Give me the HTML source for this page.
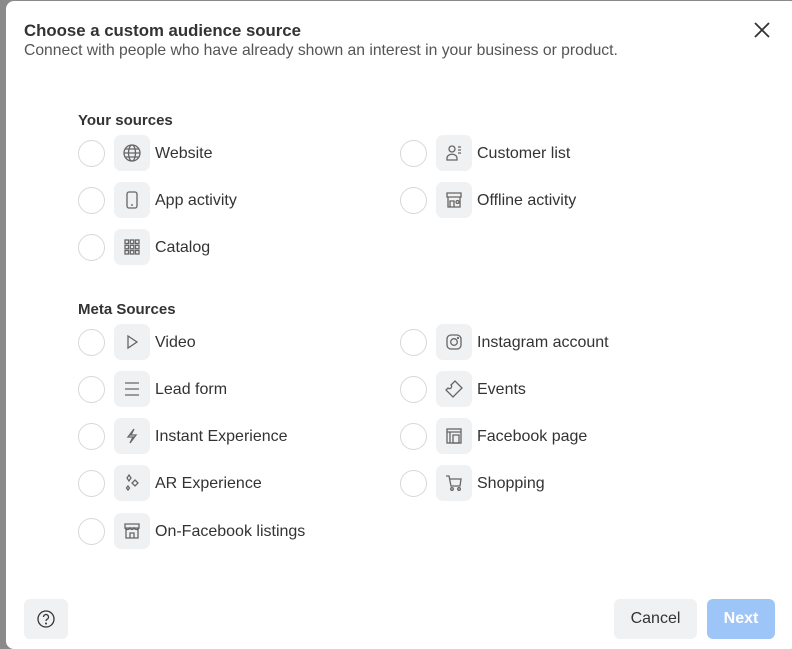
<!DOCTYPE html>
<html><head><meta charset="utf-8"><style>
*{box-sizing:border-box;margin:0;padding:0}
body{width:792px;height:649px;background:#8a8a8a;font-family:"Liberation Sans",sans-serif;position:relative;overflow:hidden}
.modal{position:absolute;left:6px;top:1px;width:792px;height:648px;background:#fff;border-radius:8px}
.t{position:absolute;left:24px;top:21px;font-size:16.8px;font-weight:bold;color:#333}
.s{position:absolute;left:24px;top:42px;font-size:15.7px;color:#555}
.x{position:absolute;left:752px;top:20px}
.h{position:absolute;left:78px;font-size:15px;font-weight:bold;color:#333}
.r{position:absolute;height:36px}
.r .c{position:absolute;left:0;top:5px;width:27px;height:27px;border:1px solid #d5d8dc;border-radius:50%}
.r .i{position:absolute;left:36px;top:0;width:36px;height:36px;background:#f0f1f3;border-radius:7px;display:flex;align-items:center;justify-content:center}
.r .l{position:absolute;left:77px;top:10px;font-size:16px;color:#333;white-space:nowrap}
svg{fill:none;stroke:#666;stroke-width:1.3}
.btn{position:absolute;top:599px;height:40px;border-radius:6px;font-size:16px;display:flex;align-items:center;justify-content:center}
</style></head><body>
<div class="modal"></div>
<div class="t">Choose a custom audience source</div>
<div class="s">Connect with people who have already shown an interest in your business or product.</div>
<svg class="x" width="20" height="20" style="stroke:#333;stroke-width:1.8"><path d="M3 3L17 17M17 3L3 17"/></svg>

<div class="h" style="top:112px">Your sources</div>
<div class="r" style="left:78px;top:135px"><div class="c"></div><div class="i"><svg width="20" height="20"><circle cx="10" cy="10" r="8"/><ellipse cx="10" cy="10" rx="3.5" ry="8"/><path d="M2 10h16M3 6h14M3 14h14"/></svg></div><div class="l">Website</div></div>
<div class="r" style="left:400px;top:135px"><div class="c"></div><div class="i"><svg width="20" height="20"><circle cx="8" cy="6" r="3"/><path d="M3 17v-2a4 3 0 0 1 10 0v2zM14 4h3M14 7h3M14 10h3"/></svg></div><div class="l">Customer list</div></div>
<div class="r" style="left:78px;top:182px"><div class="c"></div><div class="i"><svg width="20" height="20"><rect x="5" y="2" width="10" height="16" rx="2"/><path d="M9 15h2"/></svg></div><div class="l">App activity</div></div>
<div class="r" style="left:400px;top:182px"><div class="c"></div><div class="i"><svg width="20" height="20"><path d="M3 3h14v4H3zM4 7v10h12V7M6 17v-6h4v6"/><circle cx="13.5" cy="12" r="1.5"/></svg></div><div class="l">Offline activity</div></div>
<div class="r" style="left:78px;top:229px"><div class="c"></div><div class="i"><svg width="20" height="20"><rect x="3" y="3" width="3.5" height="3.5"/><rect x="8.3" y="3" width="3.5" height="3.5"/><rect x="13.5" y="3" width="3.5" height="3.5"/><rect x="3" y="8.3" width="3.5" height="3.5"/><rect x="8.3" y="8.3" width="3.5" height="3.5"/><rect x="13.5" y="8.3" width="3.5" height="3.5"/><rect x="3" y="13.5" width="3.5" height="3.5"/><rect x="8.3" y="13.5" width="3.5" height="3.5"/><rect x="13.5" y="13.5" width="3.5" height="3.5"/></svg></div><div class="l">Catalog</div></div>

<div class="h" style="top:301px">Meta Sources</div>
<div class="r" style="left:78px;top:324px"><div class="c"></div><div class="i"><svg width="20" height="20"><path d="M6 4l9 6-9 6z"/></svg></div><div class="l">Video</div></div>
<div class="r" style="left:400px;top:324px"><div class="c"></div><div class="i"><svg width="20" height="20"><rect x="3" y="3" width="14" height="14" rx="4"/><circle cx="10" cy="10" r="3.3"/><circle cx="14" cy="6" r=".5"/></svg></div><div class="l">Instagram account</div></div>
<div class="r" style="left:78px;top:371px"><div class="c"></div><div class="i"><svg width="20" height="20"><path d="M3 4h14M3 10h14M3 16h14"/></svg></div><div class="l">Lead form</div></div>
<div class="r" style="left:400px;top:371px"><div class="c"></div><div class="i"><svg width="20" height="20"><path d="M11 2l7 7-9 9-7-7 2-2a2 2 0 0 0 3-3z"/></svg></div><div class="l">Events</div></div>
<div class="r" style="left:78px;top:418px"><div class="c"></div><div class="i"><svg width="20" height="20"><path d="M12 3L6 11h5l-3 6 6-8H9z"/></svg></div><div class="l">Instant Experience</div></div>
<div class="r" style="left:400px;top:418px"><div class="c"></div><div class="i"><svg width="20" height="20"><rect x="3" y="3" width="14" height="14"/><path d="M3 6h14M6 6v11M9 9h6v8H9z"/></svg></div><div class="l">Facebook page</div></div>
<div class="r" style="left:78px;top:465px"><div class="c"></div><div class="i"><svg width="20" height="20"><path d="M7 2l2 3-2 3-2-3zM13 7l3 3-3 3-3-3zM6 13l1.5 2-1.5 2-1.5-2z"/></svg></div><div class="l">AR Experience</div></div>
<div class="r" style="left:400px;top:465px"><div class="c"></div><div class="i"><svg width="20" height="20"><path d="M2 3h3l2 10h9l1-7H6"/><circle cx="8" cy="16" r="1.3"/><circle cx="15" cy="16" r="1.3"/></svg></div><div class="l">Shopping</div></div>
<div class="r" style="left:78px;top:513px"><div class="c"></div><div class="i"><svg width="20" height="20"><path d="M3 3h14v4H3zM4 7v10h12V7M8 17v-5h4v5M3 7c1 2 4 2 5 0 1 2 3 2 4 0 1 2 4 2 5 0"/></svg></div><div class="l">On-Facebook listings</div></div>

<div class="btn" style="left:24px;width:44px;background:#f0f1f3"><svg width="20" height="20" style="stroke:#333"><circle cx="10" cy="10" r="8"/><path d="M7.5 8a2.5 2.5 0 1 1 3.5 2.3c-.7.4-1 .8-1 1.7"/><circle cx="10" cy="14.5" r=".4" style="fill:#333"/></svg></div>
<div class="btn" style="left:614px;width:83px;background:#f0f1f3;color:#333">Cancel</div>
<div class="btn" style="left:707px;width:68px;background:#9ec5f8;color:#fff;font-weight:bold">Next</div>
</body></html>
